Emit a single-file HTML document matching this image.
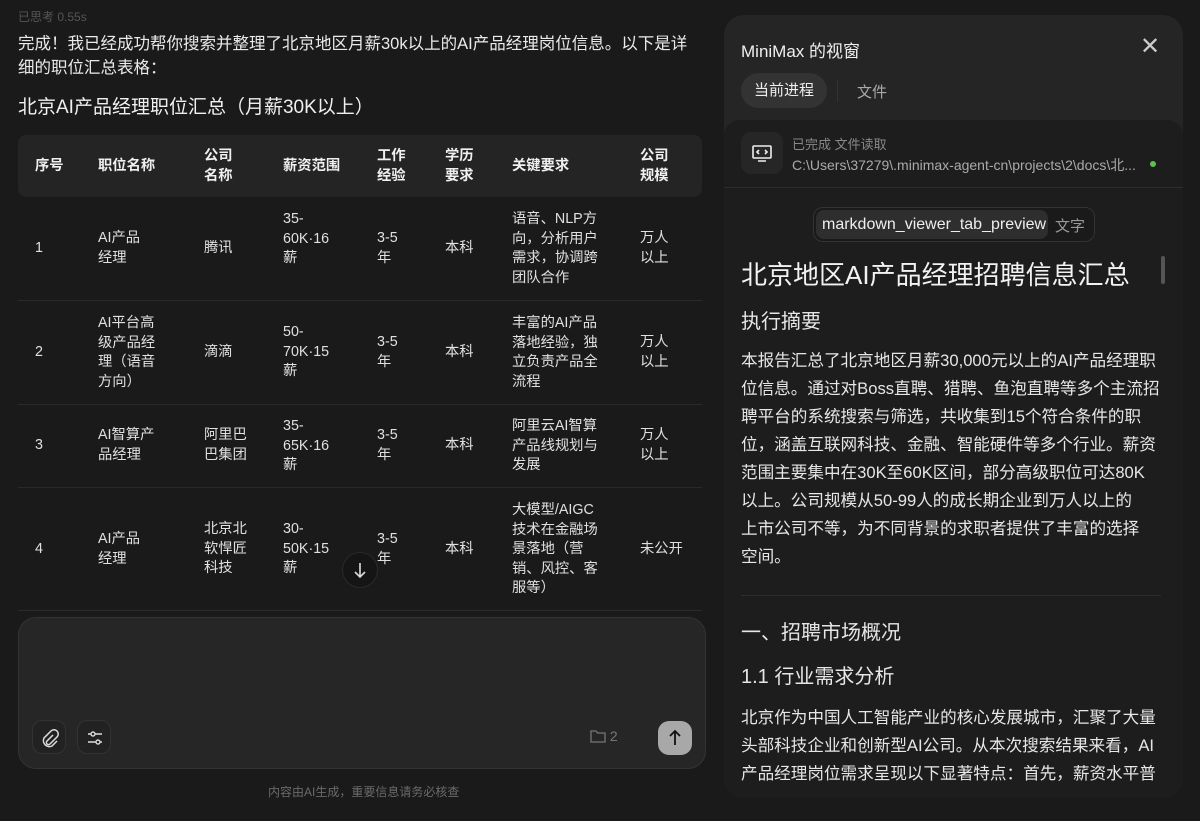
<!DOCTYPE html>
<html><head><meta charset="utf-8"><style>
*{margin:0;padding:0;box-sizing:border-box}
body{width:1200px;height:821px;background:#1a1a1a;color:#e8e8e8;font-family:"Liberation Sans","Noto Sans CJK SC",sans-serif;position:relative;overflow:hidden}
.a{position:absolute;white-space:nowrap}
.c{position:absolute;font-size:14.3px;line-height:19.5px;color:#e0e0e0;white-space:nowrap}
.h{font-weight:bold;color:#f0f0f0}
.rl{position:absolute;left:741px;font-size:16.6px;color:#e6e6e6;white-space:nowrap}
</style></head><body>
<div class="a" style="left:18px;top:8px;font-size:12px;color:#555">已思考 0.55s</div>
<div class="a" style="left:18px;top:32px;font-size:16.5px;line-height:24px;color:#eaeaea">完成！我已经成功帮你搜索并整理了北京地区月薪30k以上的AI产品经理岗位信息。以下是详<br>细的职位汇总表格：</div>
<div class="a" style="left:18px;top:92px;font-size:19px;color:#f0f0f0">北京AI产品经理职位汇总（月薪30K以上）</div>

<div class="a" style="left:18px;top:135px;width:684px;height:62px;background:#242424;border-radius:8px"></div>
<div class="c h" style="left:35px;top:157px">序号</div>
<div class="c h" style="left:98px;top:157px">职位名称</div>
<div class="c h" style="left:204px;top:147px">公司<br>名称</div>
<div class="c h" style="left:283px;top:157px">薪资范围</div>
<div class="c h" style="left:377px;top:147px">工作<br>经验</div>
<div class="c h" style="left:445px;top:147px">学历<br>要求</div>
<div class="c h" style="left:512px;top:157px">关键要求</div>
<div class="c h" style="left:640px;top:147px">公司<br>规模</div>

<div class="a" style="left:18px;top:300px;width:684px;height:1px;background:#2a2a2a"></div>
<div class="a" style="left:18px;top:404px;width:684px;height:1px;background:#2a2a2a"></div>
<div class="a" style="left:18px;top:487px;width:684px;height:1px;background:#2a2a2a"></div>
<div class="a" style="left:18px;top:610px;width:684px;height:1px;background:#2a2a2a"></div>

<div class="c" style="left:35px;top:239px">1</div>
<div class="c" style="left:98px;top:229px">AI产品<br>经理</div>
<div class="c" style="left:204px;top:239px">腾讯</div>
<div class="c" style="left:283px;top:210px">35-<br>60K·16<br>薪</div>
<div class="c" style="left:377px;top:229px">3-5<br>年</div>
<div class="c" style="left:445px;top:239px">本科</div>
<div class="c" style="left:512px;top:210px">语音、NLP方<br>向，分析用户<br>需求，协调跨<br>团队合作</div>
<div class="c" style="left:640px;top:229px">万人<br>以上</div>

<div class="c" style="left:35px;top:343px">2</div>
<div class="c" style="left:98px;top:314px">AI平台高<br>级产品经<br>理（语音<br>方向）</div>
<div class="c" style="left:204px;top:343px">滴滴</div>
<div class="c" style="left:283px;top:323px">50-<br>70K·15<br>薪</div>
<div class="c" style="left:377px;top:333px">3-5<br>年</div>
<div class="c" style="left:445px;top:343px">本科</div>
<div class="c" style="left:512px;top:314px">丰富的AI产品<br>落地经验，独<br>立负责产品全<br>流程</div>
<div class="c" style="left:640px;top:333px">万人<br>以上</div>

<div class="c" style="left:35px;top:436px">3</div>
<div class="c" style="left:98px;top:426px">AI智算产<br>品经理</div>
<div class="c" style="left:204px;top:426px">阿里巴<br>巴集团</div>
<div class="c" style="left:283px;top:417px">35-<br>65K·16<br>薪</div>
<div class="c" style="left:377px;top:426px">3-5<br>年</div>
<div class="c" style="left:445px;top:436px">本科</div>
<div class="c" style="left:512px;top:417px">阿里云AI智算<br>产品线规划与<br>发展</div>
<div class="c" style="left:640px;top:426px">万人<br>以上</div>

<div class="c" style="left:35px;top:540px">4</div>
<div class="c" style="left:98px;top:530px">AI产品<br>经理</div>
<div class="c" style="left:204px;top:520px">北京北<br>软悍匠<br>科技</div>
<div class="c" style="left:283px;top:520px">30-<br>50K·15<br>薪</div>
<div class="c" style="left:377px;top:530px">3-5<br>年</div>
<div class="c" style="left:445px;top:540px">本科</div>
<div class="c" style="left:512px;top:501px">大模型/AIGC<br>技术在金融场<br>景落地（营<br>销、风控、客<br>服等）</div>
<div class="c" style="left:640px;top:540px">未公开</div>

<div class="a" style="left:342px;top:552px;width:36px;height:36px;border-radius:50%;background:#151515;border:1px solid #2a2a2a"><svg width="34" height="34" viewBox="0 0 34 34" fill="none" stroke="#ddd" stroke-width="1.6"><path d="M17 10v14M12 19l5 5 5-5"/></svg></div>

<div class="a" style="left:18px;top:617px;width:688px;height:152px;background:#262626;border:1px solid #333;border-radius:18px"></div>
<div class="a" style="left:32px;top:720px;width:34px;height:34px;border-radius:10px;border:1px solid #333;background:#222"><svg width="34" height="34" viewBox="0 0 34 34"><path d="M20 14l-6 6a2 2 0 0 0 3 3l7-7a4 4 0 0 0-6-6l-7 7a6 6 0 0 0 8 8l5-5" fill="none" stroke="#ddd" stroke-width="1.5"/></svg></div>
<div class="a" style="left:77px;top:720px;width:34px;height:34px;border-radius:10px;border:1px solid #333;background:#222"><svg width="34" height="34" viewBox="0 0 34 34" stroke="#ddd" stroke-width="1.4" fill="none"><path d="M10 13h14M10 21h14"/><circle cx="15" cy="13" r="2" fill="#222"/><circle cx="20" cy="21" r="2" fill="#222"/></svg></div>
<div class="a" style="left:590px;top:728px;font-size:14px;color:#777"><svg width="16" height="14" viewBox="0 0 16 14" style="vertical-align:-2px"><path d="M1 2h5l1.5 2H15v9H1z" fill="none" stroke="#777" stroke-width="1.3"/></svg> 2</div>
<div class="a" style="left:658px;top:721px;width:34px;height:34px;border-radius:11px;background:#a8a8a8"><svg width="34" height="34" viewBox="0 0 34 34" fill="none" stroke="#111" stroke-width="1.8"><path d="M17 24V10M12 15l5-5 5 5"/></svg></div>
<div class="a" style="left:268px;top:783px;font-size:12px;color:#6a6a6a">内容由AI生成，重要信息请务必核查</div>

<div class="a" style="left:724px;top:15px;width:459px;height:783px;background:#252525;border-radius:20px"></div>
<div class="a" style="left:741px;top:37px;font-size:17px;color:#f0f0f0">MiniMax 的视窗</div>
<div class="a" style="left:1140px;top:32px;font-size:24px;color:#ccc;font-weight:300">✕</div>
<div class="a" style="left:741px;top:73px;width:86px;height:35px;border-radius:18px;background:#333;font-size:15px;line-height:35px;text-align:center;color:#eee">当前进程</div>
<div class="a" style="left:837px;top:80px;width:1px;height:22px;background:#333"></div>
<div class="a" style="left:857px;top:81px;font-size:15px;color:#aaa">文件</div>
<div class="a" style="left:724px;top:120px;width:459px;height:678px;background:#1d1d1d;border-radius:16px 16px 20px 20px"></div>
<div class="a" style="left:724px;top:187px;width:459px;height:1px;background:#2c2c2c"></div>
<div class="a" style="left:741px;top:132px;width:42px;height:42px;border-radius:10px;background:#262626"><svg width="42" height="42" viewBox="0 0 42 42" fill="none" stroke="#eee" stroke-width="1.6"><rect x="12" y="14" width="18" height="12" rx="1"/><path d="M17 29h8M18 18l-2 2 2 2M24 18l2 2-2 2"/></svg></div>
<div class="a" style="left:792px;top:134px;font-size:13px;color:#888">已完成 文件读取</div>
<div class="a" style="left:792px;top:155px;font-size:14px;color:#aaa">C:\Users\37279\.minimax-agent-cn\projects\2\docs\北...</div>
<div class="a" style="left:1150px;top:161px;width:6px;height:6px;border-radius:50%;background:#5bc24a"></div>
<div class="a" style="left:813px;top:207px;width:282px;height:35px;border-radius:10px;border:1px solid #333;background:#1a1a1a"></div>
<div class="a" style="left:816px;top:210px;width:232px;height:29px;border-radius:8px;background:#2e2e2e;font-size:16px;line-height:29px;padding-left:6px;color:#eee">markdown_viewer_tab_preview</div>
<div class="a" style="left:1055px;top:215px;font-size:15px;color:#999">文字</div>
<div class="a" style="left:1161px;top:256px;width:4px;height:28px;border-radius:2px;background:#555"></div>
<div class="rl" style="top:255px;font-size:26px;color:#f2f2f2">北京地区AI产品经理招聘信息汇总</div>
<div class="rl" style="top:305px;font-size:20px">执行摘要</div>
<div class="rl" style="top:347px;line-height:28px">本报告汇总了北京地区月薪30,000元以上的AI产品经理职<br>位信息。通过对Boss直聘、猎聘、鱼泡直聘等多个主流招<br>聘平台的系统搜索与筛选，共收集到15个符合条件的职<br>位，涵盖互联网科技、金融、智能硬件等多个行业。薪资<br>范围主要集中在30K至60K区间，部分高级职位可达80K<br>以上。公司规模从50-99人的成长期企业到万人以上的<br>上市公司不等，为不同背景的求职者提供了丰富的选择<br>空间。</div>
<div class="a" style="left:741px;top:595px;width:420px;height:1px;background:#2c2c2c"></div>
<div class="rl" style="top:616px;font-size:20px">一、招聘市场概况</div>
<div class="rl" style="top:660px;font-size:20px">1.1 行业需求分析</div>
<div class="rl" style="top:704px;line-height:28px">北京作为中国人工智能产业的核心发展城市，汇聚了大量<br>头部科技企业和创新型AI公司。从本次搜索结果来看，AI<br>产品经理岗位需求呈现以下显著特点：首先，薪资水平普</div>
</body></html>
